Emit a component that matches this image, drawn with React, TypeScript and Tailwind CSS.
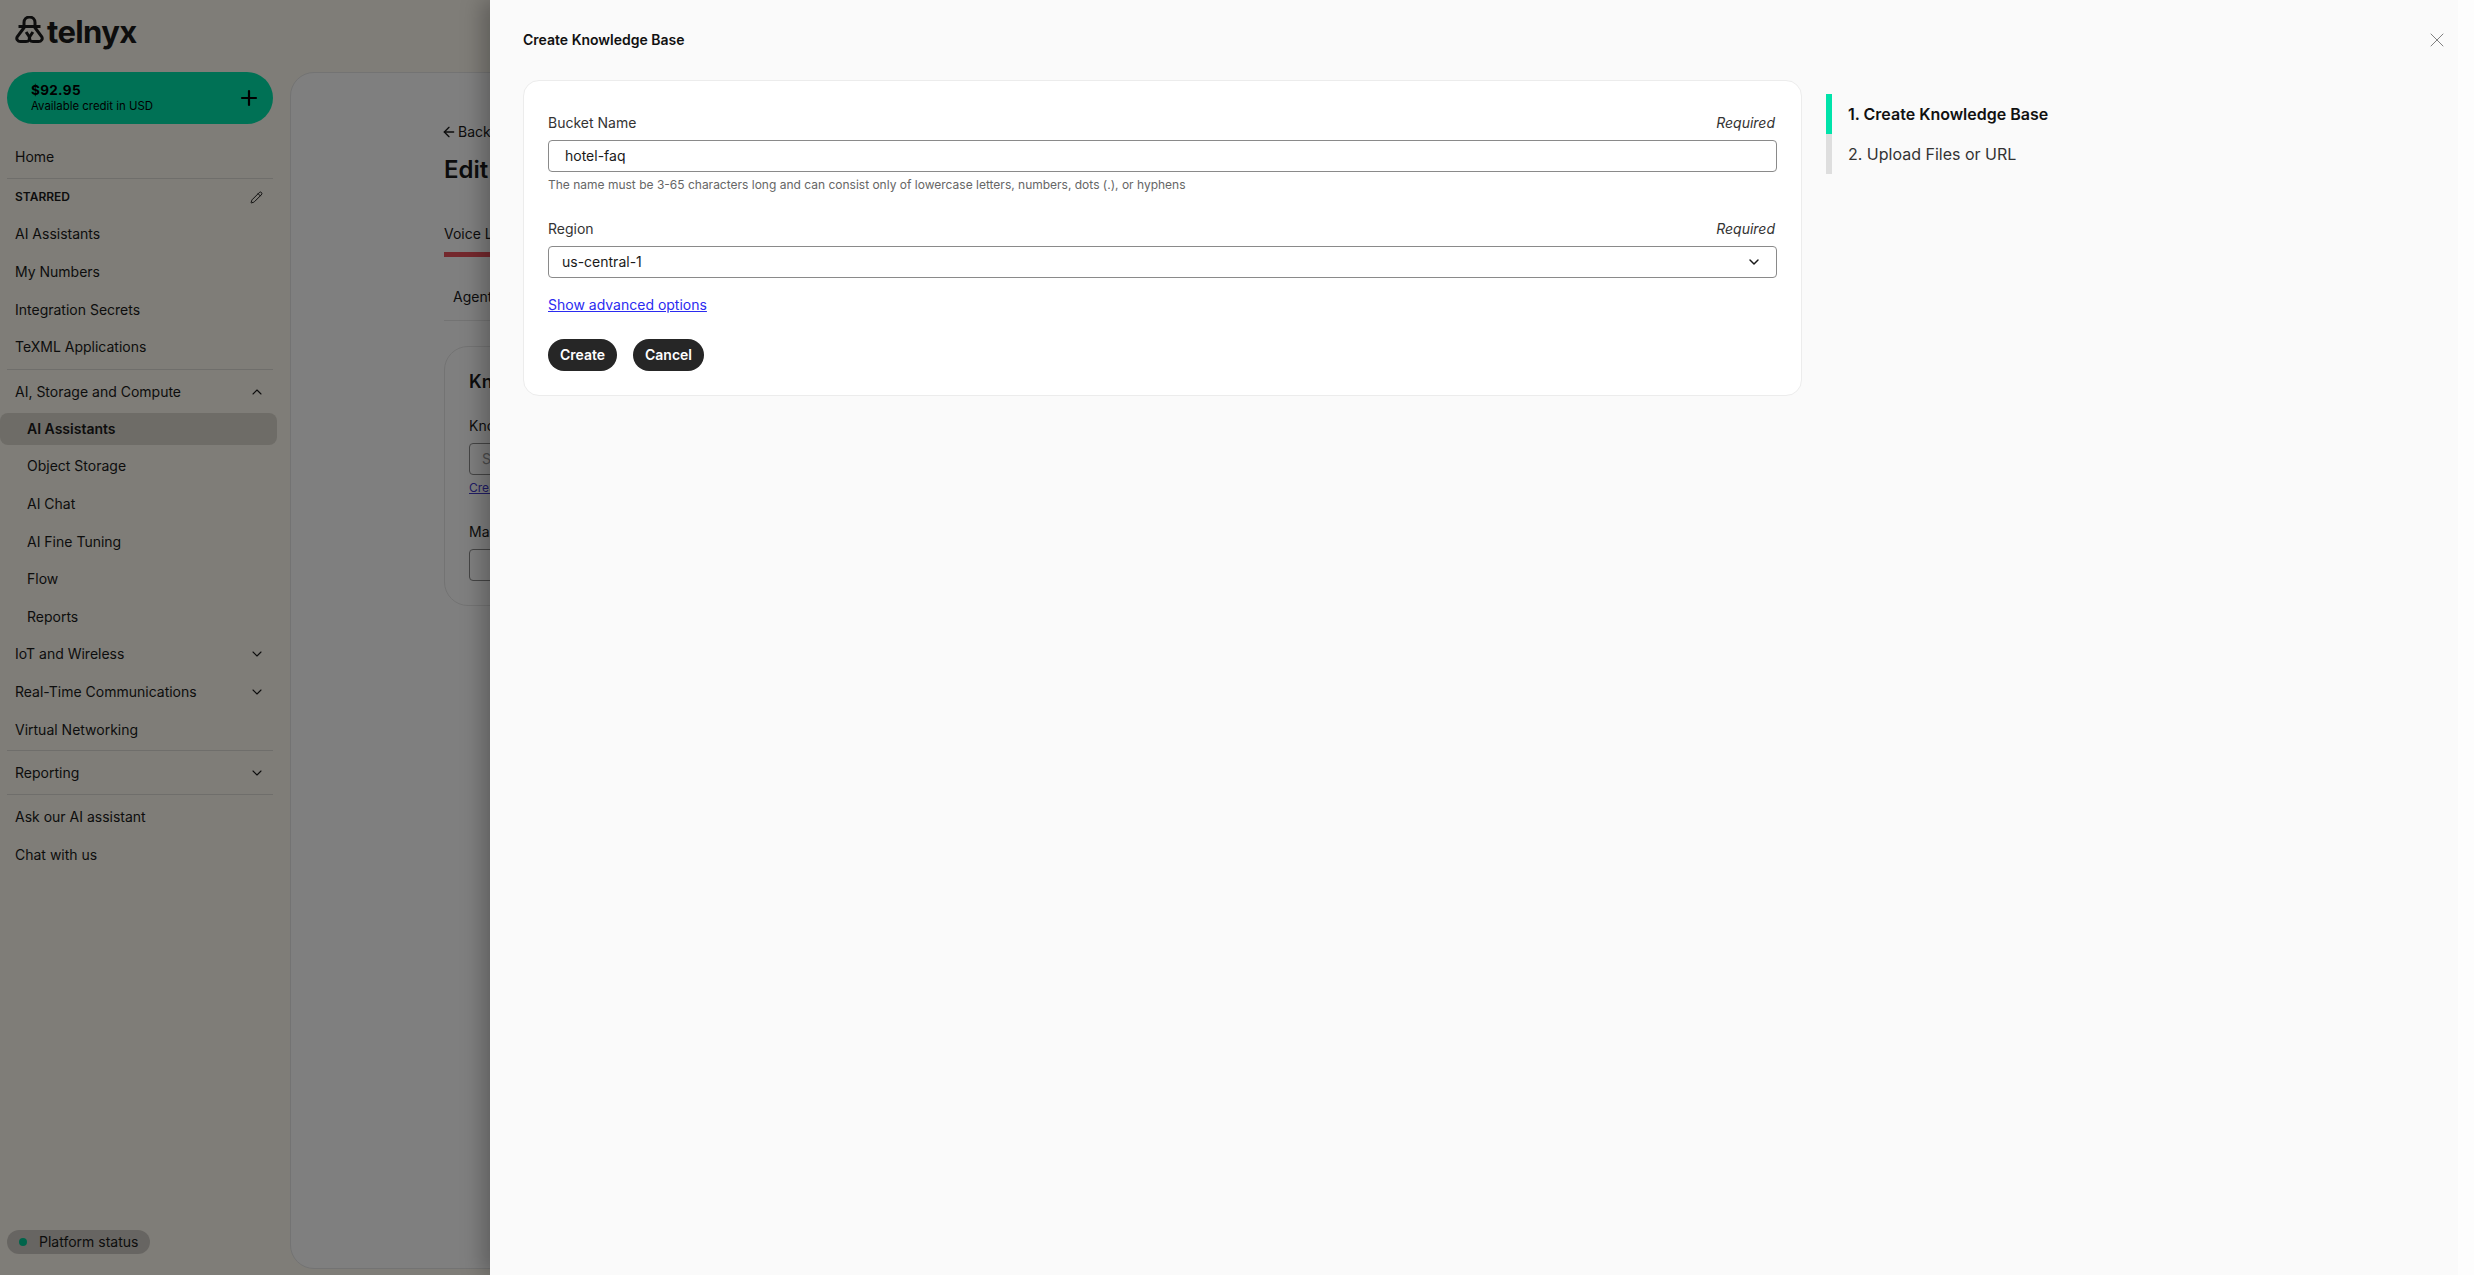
import { ArrowLeft, ChevronDown, ChevronUp, Pencil, Plus, X } from "lucide-react";

const font = "font-['Inter','Liberation_Sans',sans-serif]";

function TelnyxMark() {
  return (
    <svg width="29" height="27" viewBox="0 0 29 27" fill="none" stroke="#1a1a1a" strokeWidth="3">
      <path d="M9 10V6.5a5.5 5.5 0 0 1 11 0V10" />
      <path d="M3.5 10.5h22" />
      <path d="M9.5 11 2.4 20.5c-1.6 2.6.3 5 3.1 5h5.5c2.8 0 4.6-2.4 3.1-5l-3-4.5" />
      <path d="M19.5 11l7.1 9.5c1.6 2.6-.3 5-3.1 5H18c-2.8 0-4.6-2.4-3.1-5l3-4.5" />
    </svg>
  );
}

function NavRow({ label, icon, indent }: { label: string; icon?: "up" | "down"; indent?: boolean }) {
  return (
    <div
      className={`flex h-[37.6px] items-center justify-between pr-3 text-sm text-[#1a1a1a] ${indent ? "pl-[27px]" : "pl-[15px]"}`}
    >
      <span>{label}</span>
      {icon === "up" && <ChevronUp size={16} strokeWidth={1.6} />}
      {icon === "down" && <ChevronDown size={16} strokeWidth={1.6} />}
    </div>
  );
}

function Divider() {
  return <div className="ml-[7px] mr-1 h-px bg-[#dedcd6]" />;
}

function Sidebar() {
  return (
    <aside className="flex h-full w-[290px] shrink-0 flex-col bg-[#fefaf0] pr-[13px]">
      <div className="flex h-[72px] items-start gap-[3px] pl-[15px] pt-[16px]">
        <TelnyxMark />
        <span className="-mt-[1px] text-[31px] leading-[34px] font-bold tracking-[-0.02em] text-[#1a1a1a]">telnyx</span>
      </div>
      <div className="ml-[7px] flex h-[52px] w-[266px] items-center justify-between rounded-full bg-[#00e3aa] pl-6 pr-3">
        <div className="flex flex-col text-black">
          <span className="text-[13.5px] leading-[16px] font-bold tracking-wide">$92.95</span>
          <span className="text-[11.4px] leading-[16px]">Available credit in USD</span>
        </div>
        <Plus size={24} strokeWidth={2.2} className="text-black" />
      </div>
      <div className="mt-[14px]">
        <NavRow label="Home" />
      </div>
      <div className="mt-[2px]">
        <Divider />
      </div>
      <div className="flex h-[37px] items-center justify-between pl-[15px] pr-[14px] text-xs font-semibold text-[#1a1a1a]">
        <span>STARRED</span>
        <Pencil size={13} strokeWidth={1.8} />
      </div>
      <NavRow label="AI Assistants" />
      <NavRow label="My Numbers" />
      <NavRow label="Integration Secrets" />
      <NavRow label="TeXML Applications" />
      <div className="mt-[3px]">
        <Divider />
      </div>
      <div className="mt-[3px]">
        <NavRow label="AI, Storage and Compute" icon="up" />
      </div>
      <div className="mt-[2px] mb-[3px] flex h-8 items-center rounded-lg bg-[#dcd8ce] pl-[27px] text-sm font-semibold text-[#1a1a1a]">
        AI Assistants
      </div>
      <NavRow label="Object Storage" indent />
      <NavRow label="AI Chat" indent />
      <NavRow label="AI Fine Tuning" indent />
      <NavRow label="Flow" indent />
      <NavRow label="Reports" indent />
      <NavRow label="IoT and Wireless" icon="down" />
      <NavRow label="Real-Time Communications" icon="down" />
      <NavRow label="Virtual Networking" />
      <div className="mt-[2px]">
        <Divider />
      </div>
      <div className="mt-[3px] mb-[2px]">
        <NavRow label="Reporting" icon="down" />
      </div>
      <Divider />
      <div className="mt-[3px]">
        <NavRow label="Ask our AI assistant" />
      </div>
      <div className="mt-px">
        <NavRow label="Chat with us" />
      </div>
      <div className="mt-auto mb-[21px] ml-[7px] flex h-6 w-[143px] items-center gap-3 rounded-full bg-[#cfcbc4] pl-3 text-sm text-[#1a1a1a]">
        <span className="h-2 w-2 rounded-full bg-[#00c896]" />
        Platform status
      </div>
    </aside>
  );
}

function Behind() {
  return (
    <main className="mt-[72px] mb-[6px] flex-1 rounded-l-3xl border border-[#e6e6e6] bg-white pl-[153px] pt-[47px] text-[#1a1a1a]">
      <div className="flex h-6 items-center gap-px text-sm">
        <ArrowLeft size={16} strokeWidth={2} className="-ml-[3px]" />
        Back
      </div>
      <h1 className="mt-[10px] text-2xl leading-[32px] font-semibold">Edit</h1>
      <div className="mt-[38px] text-sm leading-5">Voice Library</div>
      <div className="mt-[8px] h-[5px] w-[500px] bg-[#e8505b]" />
      <div className="h-[64px] w-[500px] border-b border-[#e6e6e6] pl-[9px] pt-[30px] text-sm leading-5">Agent</div>
      <div className="mt-[25px] h-[260px] w-[500px] rounded-3xl border border-[#e6e6e6] pl-6 pt-[23px]">
        <div className="text-lg leading-6 font-semibold">Knowledge Base</div>
        <div className="mt-[22px] text-sm leading-5">Knowledge</div>
        <div className="mt-[7px] flex h-[32px] items-center rounded border border-[#8a8a8a] pl-3 text-sm text-[#999]">Select</div>
        <div className="mt-[5px] text-xs leading-4 text-[#4338ca] underline">Create</div>
        <div className="mt-[26px] text-sm leading-5">Max</div>
        <div className="mt-[7px] h-[32px] rounded border border-[#8a8a8a]" />
      </div>
    </main>
  );
}

function Field({ label, children }: { label: string; children: React.ReactNode }) {
  return (
    <div>
      <div className="flex h-5 items-center justify-between pr-[2px] text-sm text-[#333]">
        <span>{label}</span>
        <span className="italic">Required</span>
      </div>
      <div className="mt-[7px]">{children}</div>
    </div>
  );
}

function Panel() {
  return (
    <div className="absolute inset-y-0 right-0 left-[490px] flex bg-[#fafafa] shadow-[-8px_0_20px_rgba(0,0,0,0.25)]">
      <div className="flex-1 pl-[33px]">
        <div className="flex h-[80px] items-start justify-between pt-[30px]">
          <h2 className="text-sm leading-5 font-semibold text-[#111]">Create Knowledge Base</h2>
          <X size={24} strokeWidth={1} className="-mt-[2px] mr-[9px] text-[#808080]" />
        </div>
        <div className="flex items-start">
          <section className="w-[1279px] rounded-2xl border border-[#ececec] bg-white px-6 pt-[32px] pb-6">
            <Field label="Bucket Name">
              <div className="flex h-[32px] items-center rounded border border-[#8a8a8a] pl-4 text-sm text-[#1a1a1a]">hotel-faq</div>
            </Field>
            <p className="mt-[5px] text-xs leading-4 text-[#666]">
              The name must be 3-65 characters long and can consist only of lowercase letters, numbers, dots (.), or hyphens
            </p>
            <div className="mt-[26px]">
              <Field label="Region">
                <div className="flex h-[32px] items-center justify-between rounded border border-[#8a8a8a] pl-[13px] pr-[14px] text-sm text-[#1a1a1a]">
                  us-central-1
                  <ChevronDown size={16} strokeWidth={2.2} />
                </div>
              </Field>
            </div>
            <a className="mt-[17px] block text-sm leading-5 text-[#2b2bf0] underline">Show advanced options</a>
            <div className="mt-[24px] flex gap-4">
              <button className="h-[32px] w-[69px] rounded-full bg-[#262626] text-sm font-semibold text-white">Create</button>
              <button className="h-[32px] w-[71px] rounded-full bg-[#262626] text-sm font-semibold text-white">Cancel</button>
            </div>
          </section>
          <div className="mt-[14px] ml-6 flex flex-col">
            <div className="flex h-10 items-center border-l-[6px] border-[#00e3aa] pl-4 text-base font-semibold text-[#111]">
              1. Create Knowledge Base
            </div>
            <div className="flex h-10 items-center border-l-[6px] border-[#dedede] pl-4 text-base text-[#333]">
              2. Upload Files or URL
            </div>
          </div>
        </div>
      </div>
      <div className="w-4 bg-[#fdfdfd]" />
    </div>
  );
}

export default function App() {
  return (
    <div className={`relative flex h-[1275px] w-[2474px] overflow-hidden bg-[#fefaf0] ${font}`}>
      <Sidebar />
      <Behind />
      <div className="absolute inset-0 bg-black/50" />
      <Panel />
    </div>
  );
}
